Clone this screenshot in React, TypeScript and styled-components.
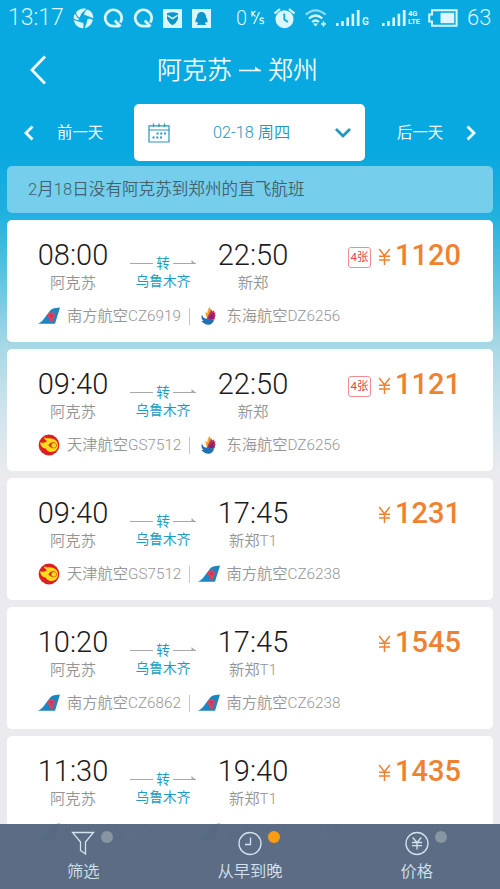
import React from 'react';
import styled, { createGlobalStyle } from 'styled-components';

const Global = createGlobalStyle`
  * { box-sizing: border-box; }
  body { margin: 0; font-family: Roboto, "Noto Sans CJK SC", sans-serif; }
`;

const Screen = styled.div`
  position: relative;
  width: 500px;
  height: 889px;
  overflow: hidden;
  display: flex;
  flex-direction: column;
  background: linear-gradient(#08a8e0 0, #08a8e0 150px, #1fb0de 212px, #58c1e1 270px, #a6d8e6 345px, #cfe4ec 410px, #ebebef 475px);
`;

const StatusBar = styled.div`
  height: 36px;
  flex: none;
  display: flex;
  align-items: center;
  padding-left: 8px;
  color: #d9f7fc;
`;

const StatusText = styled.span<{ $w: number; $size?: number }>`
  width: ${p => p.$w}px;
  font-size: ${p => p.$size ?? 23}px;
  font-weight: 300;
  line-height: 36px;
  white-space: nowrap;
`;

const StatusIcon = styled.svg<{ $gap?: number }>`
  flex: none;
  margin-right: ${p => p.$gap ?? 0}px;
`;

const TitleBar = styled.header`
  height: 68px;
  flex: none;
  display: grid;
  grid-template-columns: 80px 1fr 80px;
  align-items: center;
  color: #f2fcff;
`;

const BackIcon = styled.svg`
  margin-left: 28px;
`;

const Route = styled.h1`
  margin: 0;
  display: flex;
  justify-content: center;
  align-items: center;
  gap: 7px;
  padding: 2px 25px 0 0;
  font-size: 25px;
  font-weight: 350;
  line-height: 36px;
  white-space: nowrap;
`;

const DateBar = styled.nav`
  height: 57px;
  flex: none;
  display: flex;
  align-items: center;
`;

const DayButton = styled.button<{ $side: 'prev' | 'next' }>`
  flex: none;
  width: ${p => (p.$side === 'prev' ? 134 : 135)}px;
  padding: ${p => (p.$side === 'prev' ? '1px 0 0 23px' : '1px 0 0 32px')};
  display: flex;
  align-items: center;
  gap: 22px;
  border: 0;
  background: none;
  color: #f4fdff;
  font: 400 15.4px/22px Roboto, "Noto Sans CJK SC", sans-serif;
  white-space: nowrap;
`;

const DatePicker = styled.button`
  width: 231px;
  height: 57px;
  padding: 0 14px;
  display: flex;
  align-items: center;
  border: 0;
  border-radius: 5px;
  background: #fff;
  color: #2597bd;
  font: 350 16.3px/22px Roboto, "Noto Sans CJK SC", sans-serif;
`;

const DateText = styled.span`
  flex: 1;
  padding: 1px 0 0 43px;
  text-align: left;
`;

const Notice = styled.div`
  height: 47px;
  flex: none;
  margin: 5px 7px 7px;
  padding-left: 21px;
  border-radius: 5px;
  background: #75cfec;
  color: #43616f;
  font-size: 16.6px;
  font-weight: 350;
  line-height: 48px;
`;

const FlightList = styled.main`
  flex: 1;
  min-height: 0;
  overflow: hidden;
  padding: 0 7px;
  display: flex;
  flex-direction: column;
  gap: 7px;
`;

const Card = styled.article`
  height: 122px;
  flex: none;
  padding: 17px 32px 0 31px;
  border-radius: 5px;
  background: #fff;
`;

const Journey = styled.div`
  display: flex;
  height: 62px;
`;

const Stop = styled.div`
  width: 70px;
  text-align: center;
`;

const Time = styled.div`
  font-size: 29px;
  font-weight: 300;
  line-height: 36px;
  color: #1c1c1c;
  white-space: nowrap;
  display: flex;
  justify-content: center;
`;

const City = styled.div`
  font-size: 15.3px;
  font-weight: 350;
  line-height: 20px;
  color: #949494;
  white-space: nowrap;
`;

const Transfer = styled.div`
  width: 66px;
  margin: 0 22px;
  padding-top: 16px;
  color: #1d9cc0;
  font-size: 13.7px;
  line-height: 18px;
  text-align: center;
  white-space: nowrap;
`;

const TransferLine = styled.div`
  display: flex;
  align-items: center;
  justify-content: space-between;
  height: 19px;
`;

const Price = styled.div`
  margin-left: auto;
  height: 36px;
  display: flex;
  align-items: center;
  color: #ef8231;
`;

const Seats = styled.span`
  width: 23px;
  height: 21px;
  margin: 4px 7px 0 0;
  border: 1px solid #eb8f92;
  border-radius: 3px;
  color: #d9474d;
  font-size: 11.5px;
  line-height: 19px;
  text-align: center;
  white-space: nowrap;
`;

const Amount = styled.span`
  margin-left: 4px;
  font-size: 29px;
  font-weight: 500;
  line-height: 36px;
`;

const Airlines = styled.div`
  display: flex;
  align-items: center;
  height: 34px;
`;

const Airline = styled.div<{ $first?: boolean }>`
  width: ${p => (p.$first ? '151px' : 'auto')};
  margin-left: ${p => (p.$first ? 0 : 8)}px;
  display: flex;
  align-items: center;
  gap: ${p => (p.$first ? 7 : 6.5)}px;
  color: #969696;
  font-size: 15.25px;
  font-weight: 350;
  line-height: 20px;
  white-space: nowrap;
`;

const Divider = styled.i`
  width: 1px;
  height: 17px;
  background: #c6c6c6;
`;

const TabBar = styled.footer`
  position: absolute;
  left: 0;
  right: 0;
  bottom: 0;
  height: 65px;
  display: grid;
  grid-template-columns: repeat(3, 1fr);
  background: rgba(88, 105, 130, 0.98);
`;

const Tab = styled.button`
  position: relative;
  padding: 6px 0 0;
  display: flex;
  flex-direction: column;
  align-items: center;
  border: 0;
  background: none;
  color: #d3e3ee;
  font: 350 16.3px/24px Roboto, "Noto Sans CJK SC", sans-serif;
`;

const TabLabel = styled.span`
  margin-top: 4px;
`;

const Dot = styled.i<{ $on?: boolean }>`
  position: absolute;
  top: 7px;
  left: calc(50% + 18px);
  width: 12px;
  height: 12px;
  border-radius: 50%;
  background: ${p => (p.$on ? '#fb9d13' : '#8796a0')};
`;

type Carrier = 'southern' | 'donghai' | 'tianjin';

const names: Record<Carrier, string> = { southern: '南方航空', donghai: '东海航空', tianjin: '天津航空' };

interface Flight {
  depart: string;
  arrive: string;
  to: string;
  price: number;
  seats?: string;
  legs: [Carrier, string][];
}

const flights: Flight[] = [
  { depart: '08:00', arrive: '22:50', to: '新郑', price: 1120, seats: '4张', legs: [['southern', 'CZ6919'], ['donghai', 'DZ6256']] },
  { depart: '09:40', arrive: '22:50', to: '新郑', price: 1121, seats: '4张', legs: [['tianjin', 'GS7512'], ['donghai', 'DZ6256']] },
  { depart: '09:40', arrive: '17:45', to: '新郑T1', price: 1231, legs: [['tianjin', 'GS7512'], ['southern', 'CZ6238']] },
  { depart: '10:20', arrive: '17:45', to: '新郑T1', price: 1545, legs: [['southern', 'CZ6862'], ['southern', 'CZ6238']] },
  { depart: '11:30', arrive: '19:40', to: '新郑T1', price: 1435, legs: [['southern', 'CZ6862'], ['southern', 'CZ6238']] },
];

function CarrierLogo({ carrier }: { carrier: Carrier }) {
  if (carrier === 'southern') {
    return (
      <svg width="22" height="20" viewBox="0 0 22 20">
        <path d="M0 17.8C3 16.6 5.2 14 7.6 10.6L11.8 5C13.6 2.6 15.6 1.8 22 1.4L17 17.8Z" fill="#1c86c2" />
        <path d="M9.8 8.6C10.6 6 14.6 5.4 16.3 7.6C17.8 9.6 16 11 15.4 13L14.4 16.4L11.8 15.6L12.4 13.2C10.2 12.4 9.2 10.6 9.8 8.6Z" fill="#e63f58" />
        <path d="M11.6 9.3L14.4 8.8L13.2 11.8" fill="none" stroke="#8c3b78" strokeWidth="0.9" />
      </svg>
    );
  }
  if (carrier === 'tianjin') {
    return (
      <svg width="22" height="22" viewBox="0 0 22 22">
        <circle cx="11" cy="11" r="10.4" fill="#de1f22" />
        <path d="M2 8.2C5 9.4 7 8.8 9.2 7C7.6 6.4 6.3 5.2 6 3.2C8.6 4.6 10.6 4.2 13 4.4C17.4 4.8 20.2 7.8 20 11.6C19.8 15.6 16.8 18.2 13.2 18C10.6 17.8 8.8 16.4 7.8 14.4C5 14.6 2.6 12.2 2 8.2Z" fill="#fbdc1c" />
        <path d="M10.4 11.8C11.2 9 14.4 7.6 17 8.8C18.6 9.6 19 11 18.6 12.2C17.8 14.4 15.2 15 13 13.6C12.2 13 11.4 12.2 10.4 11.8Z" fill="#df2a20" />
        <circle cx="15.8" cy="11.4" r="2.4" fill="#fbdc1c" />
      </svg>
    );
  }
  return (
    <svg width="22" height="20" viewBox="0 0 22 20">
      <path d="M11.6 1C13 3 13.2 4.6 12.6 7L9.4 12.6C7.6 9.6 7.2 8 7.6 5.8L9.4 7.4C9.2 5 10.2 3 11.6 1Z" fill="#f2a22a" />
      <path d="M13.2 3.2L14.4 5.4L16.4 4.2L16 6.6L17.6 6.6L16.8 8.8L17.8 9.4L16.4 11.2L17.2 12.4L14 13.8L8.8 13.2C9.4 9.6 12.2 6.8 13.2 3.2Z" fill="#c22b5c" />
      <path d="M11 12L15.8 7.8M12.2 13L16.6 10.6" stroke="#66237c" strokeWidth="1.4" />
      <path d="M4 8.4C4.6 11.2 6.4 12.8 9.4 12.8C12 12.8 14.2 13.6 16.4 13C15.4 16 13.8 18.8 10.4 18.8C7.2 18.8 5.8 16.8 3.2 15.2L5.4 14.8C3.4 13 3 10.8 4 8.4Z" fill="#2270b4" />
    </svg>
  );
}

function FlightCard({ flight }: { flight: Flight }) {
  const [first, second] = flight.legs;
  return (
    <Card>
      <Journey>
        <Stop>
          <Time>{flight.depart}</Time>
          <City>阿克苏</City>
        </Stop>
        <Transfer>
          <TransferLine>
            <svg width="23" height="10"><path d="M0 5.5H23" stroke="#a9a9a9" /></svg>
            转
            <svg width="23" height="10"><path d="M0 5.5H23" stroke="#a9a9a9" /><path d="M18.5 2L23 6H18.5Z" fill="#a9a9a9" /></svg>
          </TransferLine>
          乌鲁木齐
        </Transfer>
        <Stop>
          <Time>{flight.arrive}</Time>
          <City>{flight.to}</City>
        </Stop>
        <Price>
          {flight.seats && <Seats>{flight.seats}</Seats>}
          <svg width="13" height="19" viewBox="0 0 13 19" fill="none" stroke="currentColor" strokeWidth="1.5">
            <path d="M1.2 3L6.5 9.8L11.8 3M6.5 9.8V19M1 10.2H12M1 14H12" />
          </svg>
          <Amount>{flight.price}</Amount>
        </Price>
      </Journey>
      <Airlines>
        <Airline $first><CarrierLogo carrier={first[0]} />{names[first[0]]}{first[1]}</Airline>
        <Divider />
        <Airline><CarrierLogo carrier={second[0]} />{names[second[0]]}{second[1]}</Airline>
      </Airlines>
    </Card>
  );
}

function QIcon({ gap }: { gap: number }) {
  return (
    <StatusIcon $gap={gap} width="21" height="21" viewBox="0 0 21 21" fill="none" stroke="currentColor">
      <path d="M17.2 14.6A8.2 8.2 0 1 0 10.3 18.2H16" strokeWidth="2.7" />
      <path d="M11.8 12.6L17.5 18.4" strokeWidth="2.8" />
    </StatusIcon>
  );
}

function Signal({ gap }: { gap: number }) {
  return (
    <StatusIcon $gap={gap} width="25" height="18" viewBox="0 0 25 18" fill="currentColor">
      <path d="M0 14h2.6v3H0zM5.2 12h2.6v5H5.2zM10.4 8.5H13V17h-2.6zM15.6 4.8h2.6V17h-2.6zM20.8 1h2.8v16h-2.8z" />
    </StatusIcon>
  );
}

const Network = styled.span<{ $w: number; $size: number }>`
  width: ${p => p.$w}px;
  display: flex;
  flex-direction: column;
  font-size: ${p => p.$size}px;
  font-weight: 700;
  line-height: 8.5px;
`;

const NetworkLow = styled.span`
  padding-top: 8px;
`;

export default function App() {
  return (
    <Screen>
      <Global />
      <StatusBar>
        <StatusText $w={65}>13:17</StatusText>
        <StatusIcon $gap={9} width="21" height="21" viewBox="0 0 21 21" fill="currentColor">
          <path d="M3 4.4C6 .6 10 0 13.4 1L8.6 5.2L6.6 9.6C4.6 8.4 3.2 6.6 3 4.4Z" />
          <path d="M14.6 1.4C18.6 3 20.6 6.8 20.3 10.2L15.4 8.2L11 6.4C11.4 4 12.8 2.4 14.6 1.4Z" />
          <path d="M19.8 12C19 16 16 19.4 11.6 20.2L13.4 15.4L14.6 11C17 10.6 18.6 11 19.8 12Z" />
          <path d="M9.8 20.4C5 20 1.4 16.4 .8 12L5.4 13.4L10.2 15C10.8 17 10.6 19 9.8 20.4Z" />
          <path d="M.7 10.4C.6 8.6 1 7.2 2 5.8C3.2 8 4.6 10 6.4 11.8L3.6 12Z" />
        </StatusIcon>
        <QIcon gap={9} />
        <QIcon gap={9} />
        <StatusIcon $gap={10} width="19" height="19" viewBox="0 0 19 19">
          <path d="M0 0h19v19H0z" fill="currentColor" />
          <path d="M4 4.2Q9.5 2.5 15 4.2V10Q13.5 14 9.5 16.2Q5.5 14 4 10Z" fill="#0b95ca" />
          <path d="M4.5 6.3L9.5 9.6L14.5 6.3" stroke="#d9f7fc" strokeWidth="1.4" fill="none" />
        </StatusIcon>
        <StatusIcon $gap={25} width="19" height="19" viewBox="0 0 19 19">
          <path d="M0 0h19v19H0z" fill="currentColor" />
          <path d="M5 8C5 1.2 14 1.2 14 8C15.5 10.5 16 12.5 15.3 13.5L14 12.7L13 14.5L14.3 16H10L9.5 15.4L9 16H4.7L6 14.5L5 12.7L3.7 13.5C3 12.5 3.5 10.5 5 8Z" fill="#0b95ca" />
        </StatusIcon>
        <StatusText $w={15} $size={20}>0</StatusText>
        <StatusIcon $gap={9} width="14" height="18" viewBox="0 0 14 18" fill="none" stroke="currentColor" strokeWidth="1.3">
          <path d="M1 2v5.5M4.4 2L1.5 4.8L4.6 7.5M8.5 3L2.8 15M12.8 9.5C10.8 8.6 9 9 9 10.4C9 12.2 12.8 11.2 12.8 13.2C12.8 14.8 10.4 15 8.7 14" />
        </StatusIcon>
        <StatusIcon $gap={10} width="21" height="21" viewBox="0 0 21 21">
          <circle cx="10.5" cy="11.2" r="9" fill="currentColor" />
          <path d="M.5 5.5L6 1M15 1L20.5 5.5" stroke="currentColor" strokeWidth="2.2" />
          <path d="M10.3 5.5V11.5L14 14" stroke="#08a8e0" strokeWidth="1.8" fill="none" />
        </StatusIcon>
        <StatusIcon $gap={9} width="22" height="20" viewBox="0 0 22 20" fill="none" stroke="currentColor" strokeWidth="2.3">
          <path d="M.8 6.7Q10.5-2 20.6 6.7" opacity=".65" />
          <path d="M4 10.5Q10.5 4.5 17.3 10.5M7.2 14Q10.5 11 14 14" />
          <path d="M8 15.5h5L10.5 18.5Z" fill="currentColor" stroke="none" />
          <path d="M18.5 13.5v5M16 16h5" strokeWidth="1.7" />
        </StatusIcon>
        <Signal gap={1} />
        <Network $w={20} $size={10}><NetworkLow>G</NetworkLow></Network>
        <Signal gap={1} />
        <Network $w={20} $size={7.5}><span>4G</span><span>LTE</span></Network>
        <StatusIcon $gap={9} width="30" height="18" viewBox="0 0 30 18" fill="none" stroke="currentColor">
          <path d="M4 1.2H28.6V16.8H4V12.5H1.2V5.5H4Z" strokeWidth="2" />
          <path d="M12.5 3.8H26.2V14.2H12.5Z" fill="currentColor" stroke="none" />
        </StatusIcon>
        <StatusText $w={28} $size={22}>63</StatusText>
      </StatusBar>
      <TitleBar>
        <BackIcon width="22" height="32" viewBox="0 0 22 32" fill="none" stroke="currentColor" strokeWidth="2.8">
          <path d="M17 2.5L4 16L17 29.5" />
        </BackIcon>
        <Route>
          阿克苏
          <svg width="22" height="20" viewBox="0 0 22 20">
            <path d="M0 9.5H22" stroke="currentColor" strokeWidth="1.6" />
            <path d="M16 5.5L22 10H16Z" fill="currentColor" />
          </svg>
          郑州
        </Route>
      </TitleBar>
      <DateBar>
        <DayButton $side="prev">
          <svg width="12" height="16" viewBox="0 0 12 16" fill="none" stroke="currentColor" strokeWidth="2.8"><path d="M9.5 1.5L3 8L9.5 14.5" /></svg>
          前一天
        </DayButton>
        <DatePicker>
          <svg width="22" height="20" viewBox="0 0 22 20" fill="none" stroke="currentColor" strokeWidth="1.2">
            <path d="M1 2.8H21V19H1ZM1 7H21M5.5 .5V4M11 .5V4M16.5 .5V4" />
            <path d="M8.5 10.5H18M4.5 14.5H14" strokeWidth="2" strokeDasharray="2 1.8" />
          </svg>
          <DateText>02-18 周四</DateText>
          <svg width="16" height="12" viewBox="0 0 16 12" fill="none" stroke="currentColor" strokeWidth="2.8"><path d="M1 2L8 9L15 2" /></svg>
        </DatePicker>
        <DayButton $side="next">
          后一天
          <svg width="12" height="16" viewBox="0 0 12 16" fill="none" stroke="currentColor" strokeWidth="2.8"><path d="M2.5 1.5L9 8L2.5 14.5" /></svg>
        </DayButton>
      </DateBar>
      <Notice>2月18日没有阿克苏到郑州的直飞航班</Notice>
      <FlightList>
        {flights.map((flight, i) => <FlightCard key={i} flight={flight} />)}
      </FlightList>
      <TabBar>
        <Tab>
          <svg width="24" height="26" viewBox="0 0 24 26" fill="none" stroke="currentColor" strokeWidth="1.3"><path d="M1.5 2.5H22.5L14.5 12V24L9.5 20.5V12Z" /></svg>
          <Dot />
          <TabLabel>筛选</TabLabel>
        </Tab>
        <Tab>
          <svg width="26" height="26" viewBox="0 0 26 26" fill="none" stroke="currentColor" strokeWidth="1.3"><circle cx="13" cy="13.5" r="11" /><path d="M13.5 7.5V14.5H8" /></svg>
          <Dot $on />
          <TabLabel>从早到晚</TabLabel>
        </Tab>
        <Tab>
          <svg width="26" height="26" viewBox="0 0 26 26" fill="none" stroke="currentColor" strokeWidth="1.3"><circle cx="13" cy="13.5" r="11" /><path d="M8.7 7.5L13 12.5L17.3 7.5M13 12.5V19.5M8 12.5H18M8 15.7H18" /></svg>
          <Dot />
          <TabLabel>价格</TabLabel>
        </Tab>
      </TabBar>
    </Screen>
  );
}
